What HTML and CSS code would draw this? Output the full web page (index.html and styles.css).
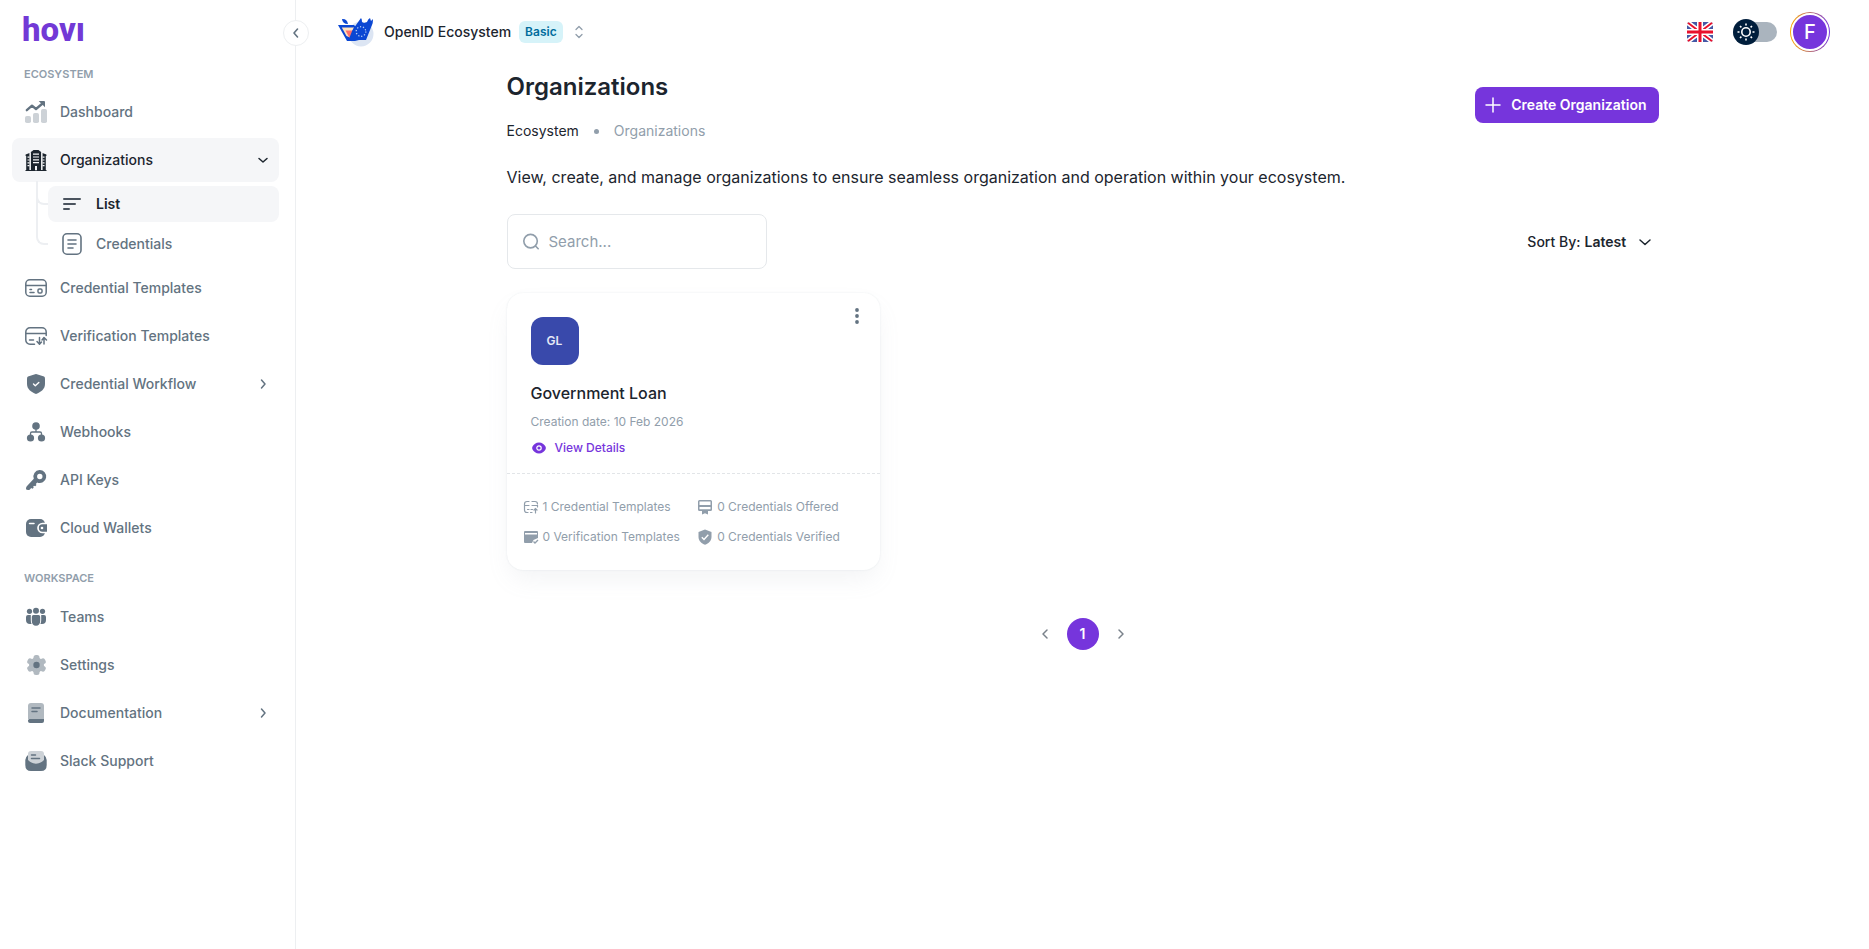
FILE: index.html
```html
<!DOCTYPE html>
<html lang="en">
<head>
<meta charset="utf-8">
<meta name="viewport" content="width=device-width, initial-scale=1">
<title>Organizations</title>
<link rel="stylesheet" href="styles.css">
</head>
<body>
<div class="app">
  <aside class="sidebar">
    <a class="brand" href="#" aria-label="hovi">hovı</a>
    <button class="collapse" type="button" aria-label="Collapse sidebar">
      <svg width="16" height="16" viewBox="0 0 16 16"><path d="M9.500 4 6 8l3.500 4" fill="none" stroke="currentColor" stroke-width="1.600" stroke-linecap="round" stroke-linejoin="round"/></svg>
    </button>
    <nav class="nav" aria-label="Main">
      <h2 class="nav-label">Ecosystem</h2>
      <ul class="nav-list">
        <li><a class="nav-item" href="#">
          <svg class="icon" viewBox="0 0 24 24"><g fill="#cdd2d7"><rect x="1" y="16" width="6" height="7" rx="1.800"/><rect x="9" y="13" width="6" height="10" rx="1.800"/><rect x="17" y="9" width="6" height="14" rx="1.800"/></g><path d="M2.800 10.200 8 5.600l4 3.400 6.500-5.500" fill="none" stroke="currentColor" stroke-width="2.300" stroke-linecap="round" stroke-linejoin="round"/><path d="M14.700 1h5.300q1 0 1 1v5.300z" fill="currentColor"/></svg>
          <span>Dashboard</span></a></li>
        <li>
          <a class="nav-item nav-item--active" href="#" aria-expanded="true">
            <svg class="icon" viewBox="0 0 24 24"><path fill="currentColor" d="M6.800 22V4.500Q6.800 3.500 8 3.200L9.500 2h5l1.500 1.200q1.200.3 1.200 1.300V22H22.500v1h-21v-1zM2.200 22V8H1.600V6.500L5.600 5v17zM21.800 22V8h.6V6.500L18.400 5v17z"/><g stroke="#f5f6f8" stroke-width="1.200"><path d="M9 6.200h6M9 9h6M9 11.800h6M9 14.600h6M3.500 9.200h2M3.500 12h2M3.500 14.800h2M3.500 17.600h2M18.500 9.200h2M18.500 12h2M18.500 14.800h2M18.500 17.600h2"/><path d="M6.200 5v17M17.800 5v17" stroke-width="1"/><path d="M12 18v4.200" stroke-width="2"/></g></svg>
            <span>Organizations</span>
            <svg class="chevron" viewBox="0 0 16 16"><path d="m4 6.500 4 3.500 4-3.500" /></svg>
          </a>
          <ul class="subnav">
            <li><a class="sub-item sub-item--active" href="#" aria-current="page">
              <svg class="icon" viewBox="0 0 24 24"><path d="M4 7h16M4 12h11M4 17h5" fill="none" stroke="#4b545f" stroke-width="2" stroke-linecap="round"/></svg>
              <span>List</span></a></li>
            <li><a class="sub-item" href="#">
              <svg class="icon" viewBox="0 0 24 24" fill="none" stroke="currentColor" stroke-width="1.600" stroke-linecap="round"><rect x="3" y="1.800" width="18" height="20.400" rx="4"/><path d="M8 8h8M8 12h8M8 16h5"/></svg>
              <span>Credentials</span></a></li>
          </ul>
        </li>
        <li><a class="nav-item" href="#">
          <svg class="icon" viewBox="0 0 24 24" fill="none" stroke="currentColor" stroke-width="1.500" stroke-linecap="round"><rect x="1.800" y="3.800" width="20.400" height="16.400" rx="4"/><path d="M2 9.500h20M6 13.500h1.500M6 16.500h4"/><rect x="14" y="13" width="4" height="4" rx="1.300"/></svg>
          <span>Credential Templates</span></a></li>
        <li><a class="nav-item" href="#">
          <svg class="icon" viewBox="0 0 24 24" fill="none" stroke="currentColor" stroke-width="1.500" stroke-linecap="round" stroke-linejoin="round"><path d="M10.500 20.200H6a4.200 4.200 0 0 1-4.200-4.200V8A4.200 4.200 0 0 1 6 3.800h12A4.200 4.200 0 0 1 22.200 8v3.500M2 9.500h20M5.500 16h4M15.500 13.500v6.500M13 17.500l2.500 2.700 2-2.200M20 20v-6M18 16l2-2.500 2.500 2.500"/></svg>
          <span>Verification Templates</span></a></li>
        <li><a class="nav-item" href="#">
          <svg class="icon" viewBox="0 0 24 24"><path fill="currentColor" d="M12 2q1 0 8 2.600 1 .4 1 2V12c0 5-4 8-9 10-5-2-9-5-9-10V6.600q0-1.600 1-2Q11 2 12 2z"/><path d="m9.500 12 1.800 1.700 3.500-3.200" fill="none" stroke="#fff" stroke-width="1.400" stroke-linecap="round" stroke-linejoin="round"/></svg>
          <span>Credential Workflow</span>
          <svg class="chevron" viewBox="0 0 16 16"><path d="M6.500 4 10 8l-3.500 4"/></svg></a></li>
        <li><a class="nav-item" href="#">
          <svg class="icon" viewBox="0 0 24 24" fill="currentColor"><circle cx="12" cy="6" r="3.800"/><circle cx="6.500" cy="18" r="3.600"/><circle cx="17.500" cy="18" r="3.600"/><path d="M12 9v3M6.500 15v-1.500q0-1.500 1.500-1.500h8q1.500 0 1.500 1.500V15" fill="none" stroke="currentColor" stroke-width="1.300"/></svg>
          <span>Webhooks</span></a></li>
        <li><a class="nav-item" href="#">
          <svg class="icon" viewBox="0 0 24 24" fill="currentColor"><path fill-rule="evenodd" d="M15.500 2a6.500 6.500 0 1 1-2.300 12.500l-1.400 1.400.7 1.100-1.300 1.300-1.200-.5-.8.9.5 1-1.200 1-1.300-.6-1.300 1.300q-.7.5-1.700.5l-1.500-.2q-.8-.2-.7-1.200.1-1.600.8-2.300l7-7.400A6.500 6.500 0 0 1 15.500 2zm.3 3.800a2.700 2.700 0 1 0 0 5.400 2.700 2.700 0 0 0 0-5.400z"/></svg>
          <span>API Keys</span></a></li>
        <li><a class="nav-item" href="#">
          <svg class="icon" viewBox="0 0 24 24"><rect x="2" y="3" width="19" height="18" rx="5" fill="currentColor"/><path d="M5.500 7.500h4.500" stroke="#fff" stroke-width="1.500" stroke-linecap="round"/><path d="M24 7.500h-5.500a4.500 4.500 0 0 0 0 9H24z" fill="currentColor" stroke="#fff" stroke-width="1.700"/><rect x="23" y="6" width="1" height="12" fill="#fff"/><circle cx="18" cy="12" r="1.300" fill="#fff"/></svg>
          <span>Cloud Wallets</span></a></li>
      </ul>
      <h2 class="nav-label nav-label--next">Workspace</h2>
      <ul class="nav-list">
        <li><a class="nav-item" href="#">
          <svg class="icon" viewBox="0 0 24 24" fill="currentColor"><circle cx="5.500" cy="6.300" r="2.600"/><circle cx="18.500" cy="6.300" r="2.600"/><circle cx="12" cy="5.700" r="3"/><path d="M6.800 10H4q-2 0-2 2v3q0 4 4 4h1.600q-.8-1.500-.8-4zM17.200 10H20q2 0 2 2v3q0 4-4 4h-1.600q.8-1.500.8-4zM9.500 10h5q1.700 0 1.700 1.700V16c0 3-1.700 4.800-4.200 4.800S7.800 19 7.800 16v-4.300Q7.800 10 9.500 10z"/></svg>
          <span>Teams</span></a></li>
        <li><a class="nav-item" href="#">
          <svg class="icon" viewBox="0 0 24 24"><g fill="#b1b9c0"><circle cx="12.500" cy="12" r="7.500"/><rect x="9.500" y="2" width="6" height="20" rx="2.500"/><rect x="9.500" y="2" width="6" height="20" rx="2.500" transform="rotate(60 12.500 12)"/><rect x="9.500" y="2" width="6" height="20" rx="2.500" transform="rotate(120 12.500 12)"/></g><circle cx="12.500" cy="12" r="3.200" fill="currentColor"/></svg>
          <span>Settings</span></a></li>
        <li><a class="nav-item" href="#">
          <svg class="icon" viewBox="0 0 24 24"><path d="M7 2h10q3 0 3 3v13H4V5q0-3 3-3z" fill="#b1b9c0"/><path d="M5.500 18H20v2q0 2-2 2H6q-2 0-2-2v-.5Q4 18 5.500 18z" fill="currentColor"/><path d="M8 7h8M8 10.500h5" stroke="currentColor" stroke-width="1.500" stroke-linecap="round"/></svg>
          <span>Documentation</span>
          <svg class="chevron" viewBox="0 0 16 16"><path d="M6.500 4 10 8l-3.500 4"/></svg></a></li>
        <li><a class="nav-item" href="#">
          <svg class="icon" viewBox="0 0 24 24"><path d="M4 12V5q0-3 3-3h10q3 0 3 3v7q-4 4-8 4t-8-4z" fill="#cdd2d7"/><path d="M4 6v5q8 7.500 16 0V6q2.700 2.200 2.700 5v5q0 6-5.700 6H7q-5.700 0-5.700-6v-5Q1.300 8.200 4 6z" fill="currentColor"/><path d="M7.500 6h4M7.500 9.500h8" stroke="currentColor" stroke-width="1.500" stroke-linecap="round"/></svg>
          <span>Slack Support</span></a></li>
      </ul>
    </nav>
  </aside>

  <div class="page">
    <header class="topbar">
      <button class="switcher" type="button">
        <svg width="40" height="32" viewBox="0 0 40 32"><circle cx="25" cy="18" r="12.500" fill="#dce5f3"/><path d="M2 9h16l3 3 2 12-4 1h-8z" fill="#0b47d3"/><path d="M5.800 11.500H18l-4 10-3.500-1.500z" fill="#ffe2bd"/><path d="M9.500 14.500h8.500L13.500 22z" fill="#ff6f6b"/><path d="M6 3q5-.5 6 5Q6.500 8 6 3z" fill="#0b47d3"/><path d="M20 9 25 2q1 1 1 4l2 1 3-1q1-3 3-4l1 3 2-2q0 4-1 6l-6 15H12.500l4-10z" fill="#0b47d3"/><circle cx="25" cy="15.500" r="4.800" fill="none" stroke="#b8cdf5" stroke-width="1.300" stroke-dasharray="1.200 1.800"/></svg>
        <span class="switcher-name">OpenID Ecosystem</span>
        <span class="badge">Basic</span>
        <svg class="updown" width="16" height="16" viewBox="0 0 16 16" fill="none" stroke="#919eab" stroke-width="1.300" stroke-linecap="round" stroke-linejoin="round"><path d="m5 5.500 3-3 3 3M5 10.500l3 3 3-3"/></svg>
      </button>
      <div class="tools">
        <button class="flag" type="button" aria-label="Language: English">
          <svg width="26" height="20" viewBox="0 0 26 20"><defs><clipPath id="flag-clip"><rect width="26" height="20" rx="3"/></clipPath></defs><g clip-path="url(#flag-clip)"><path d="M0 0h26v20H0z" fill="#4558a5"/><path d="M0 0 26 20M26 0 0 20" stroke="#fff" stroke-width="5"/><path d="M0 0 26 20M26 0 0 20" stroke="#e8112d" stroke-width="1.800"/><path d="M13 0v20M0 10h26" stroke="#fff" stroke-width="6"/><path d="M13 0v20M0 10h26" stroke="#e8112d" stroke-width="3"/></g></svg>
        </button>
        <label class="theme">
          <input type="checkbox" role="switch" aria-label="Dark mode">
          <svg class="theme-thumb" viewBox="0 0 26 26"><circle cx="13" cy="13" r="13" fill="#001e3c"/><g fill="none" stroke="#fff" stroke-width="1.600"><circle cx="13" cy="13" r="4.200"/><path d="M13 4.500v2M13 19.500v2M4.500 13h2M19.500 13h2M7 7l1.400 1.400M17.600 17.600 19 19M7 19l1.400-1.400M17.600 8.400 19 7"/></g></svg>
        </label>
        <button class="avatar" type="button" aria-label="Account"><span>F</span></button>
      </div>
    </header>

    <main class="content">
      <div class="heading">
        <div>
          <h1>Organizations</h1>
          <nav class="crumbs" aria-label="Breadcrumb"><a href="#">Ecosystem</a><i class="dot"></i><span>Organizations</span></nav>
        </div>
        <button class="create" type="button">
          <svg width="20" height="20" viewBox="0 0 20 20"><path d="M10 3v14M3 10h14" stroke="#fff" stroke-width="1.500" stroke-linecap="round"/></svg>
          Create Organization
        </button>
      </div>
      <p class="intro">View, create, and manage organizations to ensure seamless organization and operation within your ecosystem.</p>

      <div class="filters">
        <label class="search">
          <svg width="18" height="18" viewBox="0 0 20 20" fill="none" stroke="#919eab" stroke-width="1.800" stroke-linecap="round"><circle cx="9.500" cy="9" r="7.500"/><path d="m15 14.500 3 3"/></svg>
          <input type="text" placeholder="Search..." aria-label="Search organizations">
        </label>
        <label class="sort">
          <span>Sort By:</span>
          <select><option>Latest</option></select>
          <svg class="chevron" viewBox="0 0 16 16"><path d="m3 6 5 4.500L13 6"/></svg>
        </label>
      </div>

      <section class="cards">
        <article class="card">
          <div class="card-main">
            <div class="card-top">
              <div class="tile">GL</div>
              <button class="more" type="button" aria-label="More options"><svg width="20" height="20" viewBox="0 0 20 20" fill="#637381"><circle cx="10" cy="4" r="1.900"/><circle cx="10" cy="10" r="1.900"/><circle cx="10" cy="16" r="1.900"/></svg></button>
            </div>
            <h3>Government Loan</h3>
            <p class="date">Creation date: 10 Feb 2026</p>
            <a class="details" href="#"><svg width="16" height="16" viewBox="0 0 16 16"><path d="M8 2.500c3 0 5.300 1.700 6.500 4q.8 1.500 0 3c-1.200 2.300-3.500 4-6.500 4s-5.300-1.700-6.500-4q-.8-1.500 0-3c1.200-2.300 3.500-4 6.500-4z" fill="#7635dc"/><circle cx="8" cy="8" r="2.200" fill="none" stroke="#fff" stroke-width="1.200"/></svg>View Details</a>
          </div>
          <ul class="stats">
            <li><svg viewBox="0 0 16 16" fill="none" stroke="#919eab" stroke-width="1.200" stroke-linecap="round"><path d="M6 2.500H4Q1.500 2.500 1.500 5v6q0 2.500 2.500 2.500h1M9 2.500h3q2.500 0 2.500 2.500M1.500 6.500H6M9 6.500h5.500v1.500M4.500 10.500H6M8 10.500h1.500M7.500 13.500H9M12.500 14V9.500M11 11l1.500-1.500L14 11"/></svg>1 Credential Templates</li>
            <li><svg viewBox="0 0 16 16"><path fill="#919eab" fill-rule="evenodd" d="M2.500 1h11Q15 1 15 2.500v8q0 1.500-1.500 1.500H11v3.500l-3-1.300-3 1.300V12H2.500Q1 12 1 10.500v-8Q1 1 2.500 1zm0 1.500V6h11V2.500zm0 5.500v2.300h11V8z"/></svg>0 Credentials Offered</li>
            <li><svg viewBox="0 0 16 16"><path fill="#919eab" fill-rule="evenodd" d="M2 2h12q1 0 1 1v6l-4.500 2-1.500 3H2q-1 0-1-1V3q0-1 1-1zm0 2v1.500h12V4z"/><path d="m10.500 12.500 1.500 1.500 3-3" fill="none" stroke="#919eab" stroke-width="1.400"/></svg>0 Verification Templates</li>
            <li><svg viewBox="0 0 16 16"><path fill="#919eab" d="m8 .5 6.500 2.400V8c0 3.500-2.800 6.500-6.500 7.700C4.300 14.500 1.500 11.500 1.500 8V2.900z"/><path d="m4.800 8.200 2.200 2.200 4.300-4.600" fill="none" stroke="#fff" stroke-width="1.400"/></svg>0 Credentials Verified</li>
          </ul>
        </article>
      </section>

      <nav class="pager" aria-label="Pagination">
        <button type="button" aria-label="Previous page"><svg class="chevron" viewBox="0 0 16 16"><path d="M10 4 6 8l4 4"/></svg></button>
        <button type="button" class="pager-current" aria-current="page">1</button>
        <button type="button" aria-label="Next page"><svg class="chevron" viewBox="0 0 16 16"><path d="m6 4 4 4-4 4"/></svg></button>
      </nav>
    </main>
  </div>
</div>
</body>
</html>
```
FILE: styles.css
```css
*, *::before { box-sizing: border-box; }
body { margin: 0; background: #fff; color: #1c252e; font-family: Inter, "Liberation Sans", sans-serif; font-size: 14px; line-height: 22px; }
h1, h2, h3, p, ul { margin: 0; padding: 0; }
ul { list-style: none; }
a { color: inherit; text-decoration: none; }
button, input, select { font: inherit; color: inherit; border: 0; padding: 0; background: none; }
button { cursor: pointer; }
svg { display: block; flex: none; }

.app { display: flex; min-height: 100vh; }
.sidebar { position: relative; flex: none; width: 296px; border-right: 1px solid #edeff1; padding: 12px 16px 24px 12px; }
.brand { display: block; height: 36px; margin-bottom: 10px; padding-left: 10px; color: #7239d6; font-family: Roboto, sans-serif; font-weight: 800; font-size: 33px; line-height: 36px; }
.collapse { position: absolute; top: 20px; right: -14px; width: 26px; height: 26px; border: 1px solid #edeff1; border-radius: 50%; background: #fff; color: #637381; display: grid; place-items: center; }

.nav-label { height: 32px; padding: 6px 12px; font-size: 11px; line-height: 20px; font-weight: 600; text-transform: uppercase; color: #919eab; }
.nav-label--next { height: 33px; margin-top: 12px; }
.nav-list { display: grid; gap: 4px; }
.nav-item { display: flex; align-items: center; gap: 12px; height: 44px; padding: 0 8px 0 12px; border-radius: 8px; color: #637381; font-weight: 500; }
.nav-item--active { background: #f5f6f8; color: #1c252e; }
.nav-item .chevron { margin-left: auto; }
.icon { width: 24px; height: 24px; }
.chevron { width: 16px; height: 16px; flex: none; fill: none; stroke: currentColor; stroke-width: 1.5; stroke-linecap: round; stroke-linejoin: round; }

.subnav { display: grid; gap: 4px; padding: 4px 0 0 36px; }
.subnav li { position: relative; }
.subnav li::before { content: ""; position: absolute; left: -12px; bottom: 17px; width: 12px; height: 24px; border: solid #edeff2; border-width: 0 0 2px 2px; border-bottom-left-radius: 8px; }
.subnav li + li::before { height: 64px; }
.sub-item { display: flex; align-items: center; gap: 12px; height: 36px; padding: 0 12px; border-radius: 8px; color: #637381; font-weight: 500; }
.sub-item--active { background: #f5f6f8; color: #1c252e; font-weight: 600; }

.page { flex: 1; min-width: 0; }
.topbar { display: flex; align-items: center; justify-content: space-between; height: 64px; padding: 0 39px 0 40px; }
.switcher { display: flex; align-items: center; gap: 8px; }
.switcher-name { font-weight: 500; }
.badge { height: 22px; padding: 0 6px; border-radius: 6px; background: #d6f3f9; color: #006c9c; font-size: 12px; font-weight: 600; }
.tools { display: flex; align-items: center; }
.flag { margin-right: 20px; }
.theme { position: relative; width: 44px; height: 26px; margin-right: 13px; display: flex; align-items: center; }
.theme input { appearance: none; width: 44px; height: 20px; margin: 0; border-radius: 10px; background: #aab4be; }
.theme-thumb { position: absolute; left: 0; top: 0; width: 26px; height: 26px; }
.avatar { width: 40px; height: 40px; padding: 1px; border-radius: 50%; background: linear-gradient(90deg, #ffab00, #7635dc); }
.avatar span { display: grid; place-items: center; height: 38px; border: 2px solid #fff; border-radius: 50%; background: #7635dc; color: #fff; font-size: 20px; font-weight: 500; }

.content { max-width: 1200px; margin: 0 auto; padding: 5px 24px 40px; }
.heading { display: flex; align-items: flex-start; justify-content: space-between; }
h1 { font-size: 24px; line-height: 36px; font-weight: 600; }
.crumbs { display: flex; align-items: center; margin-top: 15px; }
.crumbs span { color: #919eab; }
.dot { width: 5px; height: 5px; margin: 0 15px; border-radius: 50%; background: #919eab; }
.create { display: flex; align-items: center; gap: 8px; height: 36px; margin-top: 18px; padding: 0 12px 0 8px; border-radius: 8px; background: #7635dc; color: #fff; font-weight: 600; }
.intro { margin-top: 23px; font-size: 16px; line-height: 24px; }
.filters { display: flex; align-items: center; justify-content: space-between; margin-top: 25px; }
.search { display: flex; align-items: center; gap: 9px; width: 260px; height: 55px; padding: 0 14px; border: 1px solid #e5e8eb; border-radius: 8px; }
.search input { flex: 1; min-width: 0; font-size: 15px; outline: 0; }
.search input::placeholder { color: #919eab; opacity: 1; }
.sort { display: flex; align-items: center; gap: 4px; padding-right: 6px; font-weight: 500; }
.sort select { appearance: none; font-weight: 600; }
.sort .chevron { margin-left: 6px; }

.cards { display: grid; grid-template-columns: repeat(3, 1fr); gap: 16px; margin-top: 24px; }
.card { border-radius: 16px; box-shadow: 0 0 2px rgba(145, 158, 171, .2), 0 12px 24px -4px rgba(145, 158, 171, .12); }
.card-main { padding: 24px 24px 16px; border-bottom: 1px dashed #e2e5e8; }
.card-top { display: flex; justify-content: space-between; align-items: flex-start; }
.tile { display: grid; place-items: center; width: 48px; height: 48px; border-radius: 12px; background: #3949ab; color: #e6e9f6; font-size: 12px; font-weight: 600; }
.more { margin: -11px -11px 0 0; }
h3 { margin-top: 16px; font-size: 16px; line-height: 24px; font-weight: 500; }
.date { margin-top: 8px; font-size: 12px; line-height: 18px; color: #919eab; }
.details { display: flex; align-items: center; gap: 8px; margin-top: 8px; font-size: 12px; line-height: 18px; font-weight: 500; color: #7635dc; }
.stats { display: grid; grid-template-columns: 1fr 1fr; gap: 12px 8px; padding: 24px 16px; font-size: 12px; line-height: 18px; color: #919eab; }
.stats li { display: flex; align-items: center; gap: 4px; white-space: nowrap; }
.stats svg { width: 16px; height: 16px; }

.pager { display: flex; justify-content: center; align-items: center; gap: 6px; margin-top: 48px; }
.pager button { display: grid; place-items: center; width: 32px; height: 32px; border-radius: 50%; color: #7a828b; }
.pager .pager-current { background: #7635dc; color: #fff; font-weight: 600; }
```
